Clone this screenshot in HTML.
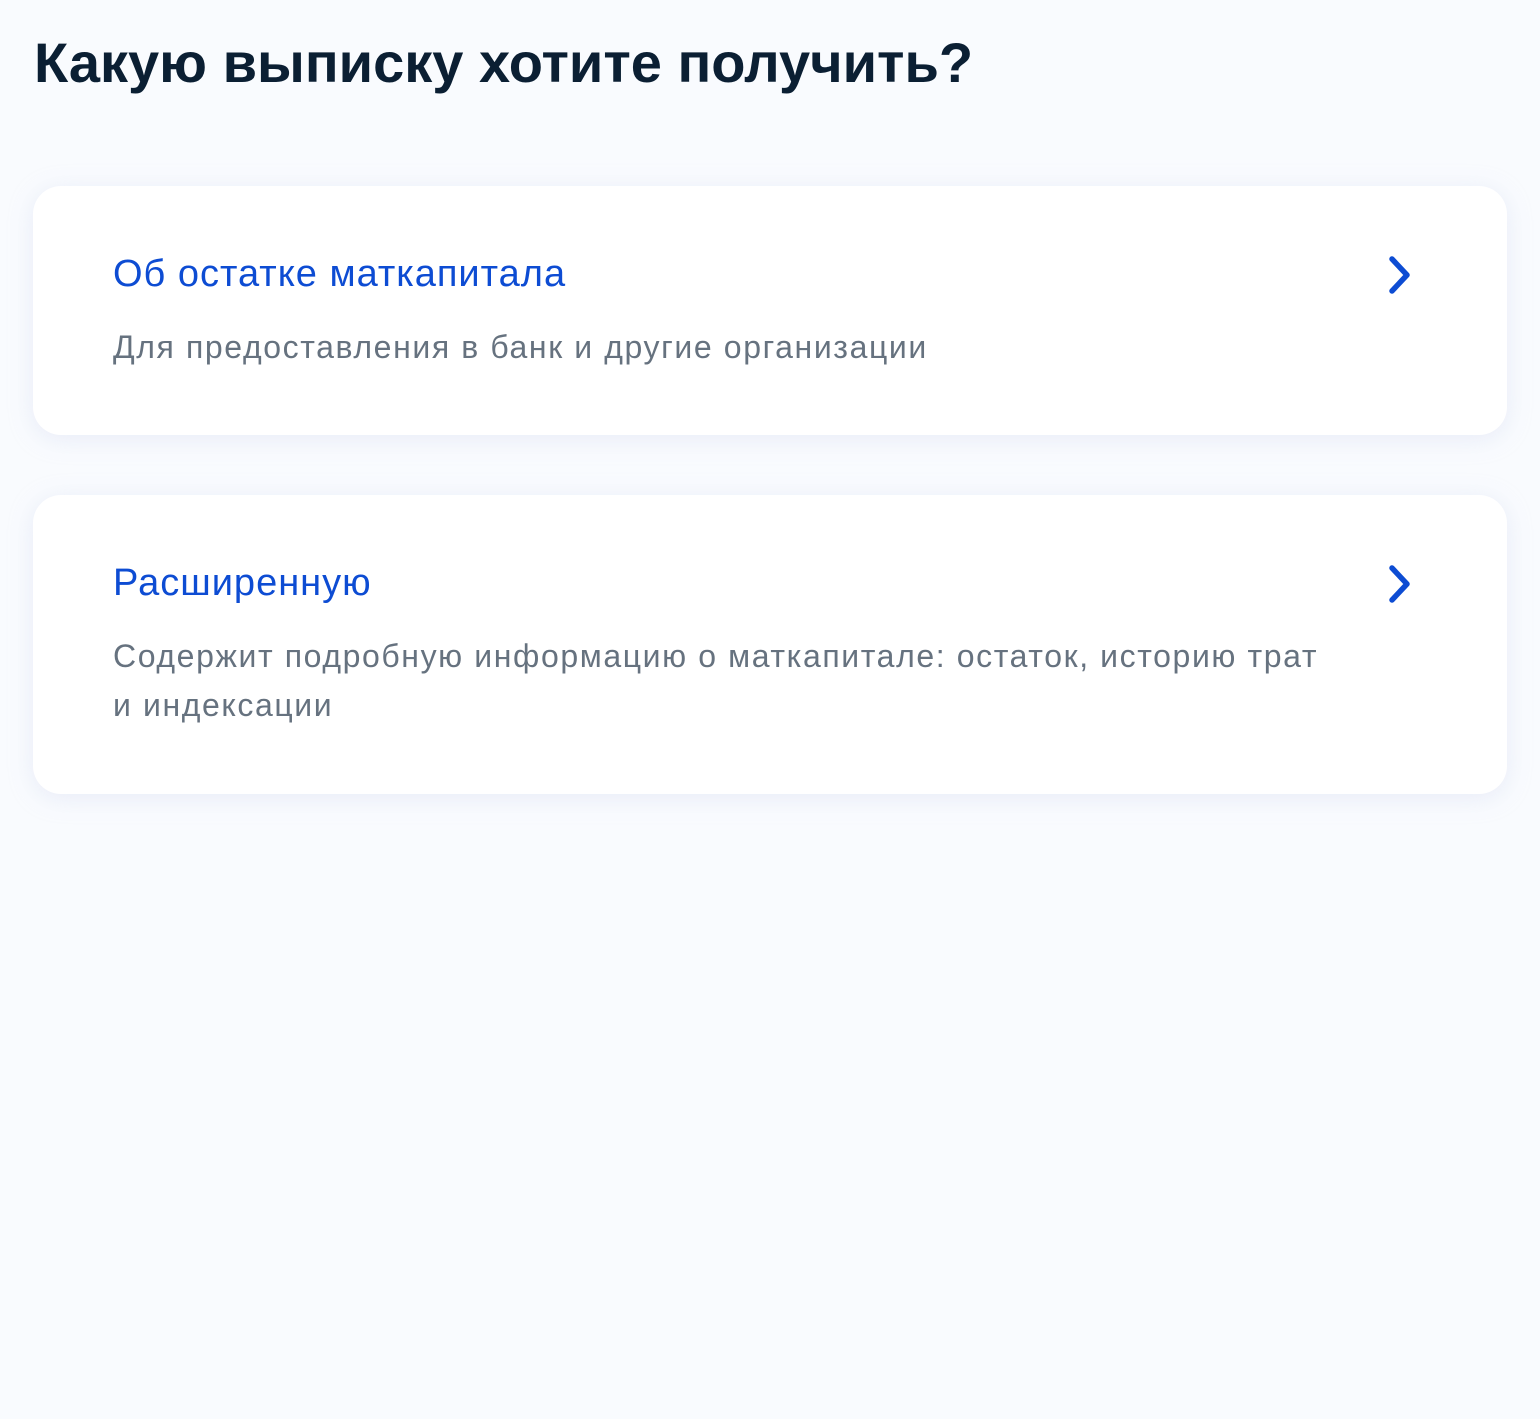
<!DOCTYPE html>
<html><head><meta charset="utf-8"><style>
html,body{margin:0;padding:0;}
body{width:1540px;height:1419px;background:#f9fbfe;font-family:"Liberation Sans",sans-serif;position:relative;overflow:hidden;}
h1{position:absolute;left:34px;top:28px;margin:0;font-size:56px;line-height:70px;font-weight:bold;color:#0b1f33;white-space:nowrap;}
.card{position:absolute;left:33px;width:1474px;background:#fff;border-radius:28px;box-shadow:0 4px 24px rgba(200,210,235,0.35);}
.t{position:absolute;left:80px;font-size:38px;letter-spacing:1px;color:#0d4cd3;white-space:nowrap;}
.s{position:absolute;left:80px;font-size:32px;letter-spacing:1.6px;line-height:49px;color:#66727f;white-space:nowrap;}
svg{position:absolute;left:1350px;}
</style></head><body>
<h1>Какую выписку хотите получить?</h1>
<div class="card" style="top:186px;height:249px;">
<div class="t" style="top:67px;">Об остатке маткапитала</div>
<div class="s" style="top:137px;">Для предоставления в банк и другие организации</div>
<svg style="top:68px" width="40" height="44" viewBox="0 0 40 44"><path d="M9 5 L24 21 L9 37" fill="none" stroke="#0d4cd3" stroke-width="5.5" stroke-linecap="round" stroke-linejoin="round"/></svg>
</div>
<div class="card" style="top:495px;height:299px;">
<div class="t" style="top:67px;">Расширенную</div>
<div class="s" style="top:137px;">Содержит подробную информацию о маткапитале: остаток, историю трат<br>и индексации</div>
<svg style="top:68px" width="40" height="44" viewBox="0 0 40 44"><path d="M9 5 L24 21 L9 37" fill="none" stroke="#0d4cd3" stroke-width="5.5" stroke-linecap="round" stroke-linejoin="round"/></svg>
</div>
</body></html>
